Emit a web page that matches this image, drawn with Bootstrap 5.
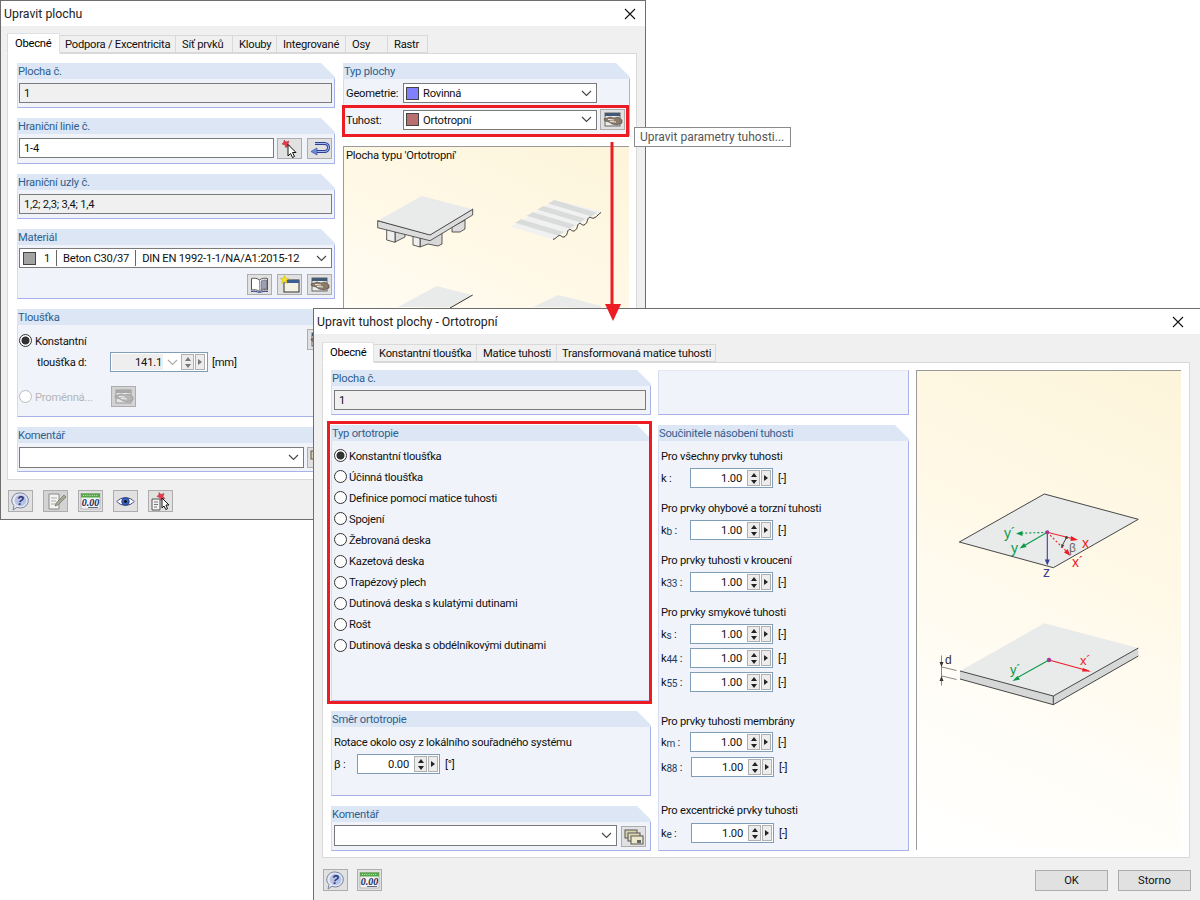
<!DOCTYPE html>
<html lang="cs">
<head>
<meta charset="utf-8">
<title>Upravit plochu</title>
<link href="https://cdn.jsdelivr.net/npm/bootstrap@5.3.0/dist/css/bootstrap.min.css" rel="stylesheet">
<style>
html,body{margin:0;background:#fff}
body{position:relative;width:1200px;height:900px;overflow:hidden;font-family:Roboto,"Liberation Sans",sans-serif;font-size:11.2px;line-height:16px;letter-spacing:-.23px;color:#111;--bs-body-font-size:11.2px}
.win{position:absolute;background:#f0f0f0;border:1px solid #6e6e6e;display:flex;flex-direction:column}
.w1{left:0;top:0;width:646px;height:520px;padding-bottom:6px}
.w2{left:313px;top:308px;width:890px;height:595px}
.wt{background:#fff;height:25px;flex:none;display:flex;align-items:center;justify-content:space-between;padding:0 9px 0 3px;font-size:12.300px;letter-spacing:0;color:#222}
.w2 .wt{padding-right:18px}
.wb{padding:7px 6px 0;flex:1;min-height:0;display:flex;flex-direction:column}
.w2 .wb{padding:8px 8px 0}
.tabsx{border:0;flex-wrap:nowrap;margin:0;height:20px;position:relative;z-index:2}
.tabsx .nav-link{height:18px;margin:2px 0 0;padding:1px 0 0 6px;border:1px solid #d9d9d9;border-left:0;border-radius:0;background:#f0f0f0;color:#111;line-height:16px;font-size:11.2px;white-space:nowrap;overflow:hidden;display:block;width:100%}
.tabsx .nav-link.active{height:21px;margin:0;background:#fff;border-left:1px solid #d9d9d9;border-bottom-color:#fff;padding:2px 0 0 7px}
.t1 .nav-item:nth-child(1){width:53px}.t1 .nav-item:nth-child(2){width:116px}.t1 .nav-item:nth-child(3){width:57px}.t1 .nav-item:nth-child(4){width:44px}.t1 .nav-item:nth-child(5){width:69px}.t1 .nav-item:nth-child(6){width:42px}.t1 .nav-item:nth-child(7){width:40px}
.t2 .nav-item:nth-child(1){width:52px}.t2 .nav-item:nth-child(2){width:103px}.t2 .nav-item:nth-child(3){width:80px}.t2 .nav-item:nth-child(4){width:159px}
.t1 .nav-item:nth-child(2) .nav-link,.t2 .nav-item:nth-child(2) .nav-link,.t2 .nav-item:nth-child(4) .nav-link{padding-left:5px}
.pan{background:#fff;border:1px solid #d9d9d9;display:flex}
.w1 .pan{width:630px;height:427px;padding:9px 0 0 9px;gap:8px;overflow:hidden}
.w2 .pan{width:868px;height:496px;padding:7px 0 0 8px;gap:7px;overflow:hidden}
.colv{display:flex;flex-direction:column;gap:10px;flex:none}
.cl1{width:318px}.cr1{width:287px}.cl2{width:320px}.cm2{width:251px}
.gb{display:flex;flex-direction:column;flex:none;position:relative}
.gbh{height:16px;flex:none;background:#dce6f4;color:#2f5f8f;padding-left:1px;line-height:17px;font-size:11.2px;clip-path:polygon(0 0,calc(100% - 14px) 0,100% 14px,100% 100%,0 100%)}
.gbb{flex:1;background:#f0f4fa;border-right:1px solid #a9b2e8;border-bottom:1px solid #a9b2e8;border-left:1px solid #d5dbf3;padding:4px 2px 0 1px;min-height:0}
.w2 .gbb{padding:4px 4px 0 2px}
.h45{height:45px}.h46{height:46px}.h70{height:70px}.h108{height:108px}.h73{height:73px}.h276{height:276px}.h85{height:85px}.h426{height:426px}
.emptyb{border-top:1px solid #e4e8f4}
.fx{height:20px;border:1px solid #7a7a7a;background:#fff;border-radius:0;padding:2px 4px 0;font-size:11.2px;line-height:16px;color:#111;min-height:0;display:flex;align-items:center}
.fx.ro{background:#f0f0f0;opacity:1}
.lr{display:flex;gap:3px;align-items:flex-start}
.bt{width:25px;height:21px;background:#e1e1e1;border:1px solid #adadad;border-radius:0;padding:0;display:flex;align-items:center;justify-content:center;flex:none;--bs-btn-padding-x:0}
.bt svg{width:23px;height:19px;display:block}
.bt.dis{background:#d3d3d3}
.bsp{margin-left:2px}
.bms{margin-left:3px}
.bend{display:flex;justify-content:flex-end;gap:5px;margin-top:6px}
.cmb{display:flex;align-items:center;height:20px;border:1px solid #7a7a7a;background:#fff;padding:0 4px 0 2px;position:relative;flex:none}
.cmb>span:not(.sw):not(.sepv){padding-top:2px}
.cmbw{width:194px}
.cmbm{margin-top:-1px;padding-left:3px}
.cm21{height:21px}
.cmup{margin-top:-1px}
.chev{margin-left:auto;width:11px;height:7px;flex:none}
.sw{width:13px;height:13px;border:1px solid #444;flex:none;margin-right:4px}
.swg{background:#a3a3a3}.swb{background:#8080ff}.swr{background:#b96f6f}
.sepv{width:1px;height:16px;background:#666;margin:0 6px;flex:none}
.rowlbl{width:58px;flex:none;padding:2px 0 0 1px}
.mt6x{margin-top:6px}
.redr{position:relative}
.redr::after{content:"";position:absolute;border:3px solid #ed1c24;pointer-events:none;z-index:5}
.rr1::after{left:-3px;top:-4px;right:-2px;bottom:-7px}
.rr2::after{left:-4px;top:-4px;right:-1px;bottom:-3px}
.rb.form-check-input{width:13px;height:13px;margin:0;flex:none;border:1px solid #333;background-color:#fff;background-image:none;box-shadow:none;float:none}
.rb.form-check-input:checked[type=radio]{background-color:#fff;border-color:#333;background-image:radial-gradient(circle at center,#333 0 3.600px,#fff 4.400px)}
.rb.form-check-input:disabled{opacity:1;border-color:#bbb;background:#fff}
.radl{display:flex;flex-direction:column}
.radl .form-check{height:21.100px;min-height:0;padding:0;margin:0;display:flex;align-items:center;gap:2px}
.form-check-label{font-size:11.2px;opacity:1;padding-top:2px}
.gry{color:#777}
.th1{height:23px;display:flex;align-items:center;gap:3px}
.th1 .bt{margin-left:auto;align-self:flex-start}
.th2{display:flex;align-items:center;height:20px;padding-left:18px}
.th2 .ll{width:73px;padding-top:2px}
.th3{display:flex;align-items:center;gap:3px;height:21px;margin-top:14px}
.th3 .ll{width:73px}
.sp{display:flex;align-items:stretch;height:20px;border:1px solid #7f9db9;background:#fff;width:83px;flex:none;padding:1px}
.sp .v{flex:1;text-align:right;padding:1px 5px 0 0;line-height:16px}
.sp .ud{width:13px;background:#ececec;border:1px solid #b0b0b0;display:flex;flex-direction:column;align-items:center;justify-content:space-around;flex:none}
.sp .ud i{display:block;width:0;height:0;border-left:3px solid transparent;border-right:3px solid transparent}
.sp .ud i:first-child{border-bottom:4px solid #222}
.sp .ud i:last-child{border-top:4px solid #222}
.sp .ar{width:10px;background:#ececec;border:1px solid #b0b0b0;margin-left:1px;display:flex;align-items:center;justify-content:center;flex:none}
.sp .ar i{display:block;width:0;height:0;border-top:3px solid transparent;border-bottom:3px solid transparent;border-left:4px solid #222}
.spth{width:98px}
.spth .v{background:#eee;flex:none;width:51px;padding-right:1px}
.spth .gch{width:18px;display:flex;align-items:center;justify-content:center;flex:none}
.spth .gch svg{width:11px;height:7px}
.spth .ud i:first-child{border-bottom-color:#777}.spth .ud i:last-child{border-top-color:#777}.spth .ar i{border-left-color:#777}
.unit{margin-left:4px;padding-top:2px}
.srow{display:flex;align-items:center;height:20px}
.srow .k{width:29px;flex:none;padding-top:2px}
.srow .k.kb{width:23px}
.srow .unit{margin-left:5px}
.ks1 .k{width:30px}
.sline{height:16px;line-height:16px}
.mt3x{margin-top:3px}.mt2x{margin-top:2px}.mt5x{margin-top:5px}.mt13{margin-top:13px}.mt22{margin-top:22px}.mt26{margin-top:26px}
.w2 .gbb.mid8{padding-top:8px}
.kk sub{font-size:10px;bottom:-.1em;color:#1c3d66}
.cmrow{display:flex;gap:4px;align-items:flex-start}
.prev{background:linear-gradient(205deg,#fdf5da 0%,#fff8e6 35%,#fffdf6 70%,#fff 100%);border-left:1px solid #9a9a9a;border-top:1px solid #9a9a9a;position:relative;flex:none}
.pv1{width:286px;height:324px}
.pv2{width:265px;height:480px}
.pv1 .pt{padding:1px 0 0 2px;height:20px}
.prev svg{display:block}
.foot{display:flex;align-items:flex-start;gap:10px;padding:10px 0 0 1px}
.foot .bt{height:22px}
.w2 .foot{padding:11px 0 0 1px;gap:9px;width:869px}
.foot .bw{margin-left:auto;display:flex;gap:10px;margin-top:1px}
.bw .btn{width:73px;height:21px;border-radius:0;background:#e1e1e1;border:1px solid #adadad;font-size:11.2px;line-height:18px;padding:0;color:#111;letter-spacing:0}
.tipx{position:absolute;left:634px;top:127px;width:157px;height:20px;background:#fff;border:1px solid #8a8a8a;color:#555;font-size:12px;letter-spacing:0;line-height:18px;padding-left:5px;z-index:20;white-space:nowrap}
.ovl{position:absolute;left:0;top:0;z-index:30;pointer-events:none}
</style>
</head>
<body>
<svg width="0" height="0" class="d-block" aria-hidden="true">
<defs>
<symbol id="chev" viewBox="0 0 11 7"><path d="M1 1l4.500 4.500L10 1" fill="none" stroke="#444" stroke-width="1.100"/></symbol>
<symbol id="chevg" viewBox="0 0 11 7"><path d="M1 1l4.500 4.500L10 1" fill="none" stroke="#aaa" stroke-width="1.100"/></symbol>
<symbol id="x" viewBox="0 0 12 12"><path d="M1 1l10 10M11 1L1 11" stroke="#111" stroke-width="1.100"/></symbol>
<symbol id="hand" viewBox="0 0 23 19"><rect x="4" y="3" width="15" height="13" fill="#ececec" stroke="#666"/><rect x="4" y="3" width="15" height="3" fill="#3f5a78"/><path d="M3 9l6-2 4 1 4-1 4 3v3l-5 2-5-1-3-2-4-1z" fill="#8b7a68" stroke="#3b3029" stroke-width=".5"/><path d="M7 9.500l6 .5M9 11.500l6 .5" stroke="#f3ede4" stroke-width="1.200"/></symbol>
<symbol id="handg" viewBox="0 0 23 19"><rect x="4" y="3" width="15" height="13" fill="#e4e4e4" stroke="#999"/><rect x="4" y="3" width="15" height="3" fill="#a8a8a8"/><path d="M3 9l6-2 4 1 4-1 4 3v3l-5 2-5-1-3-2-4-1z" fill="#b5b5b5" stroke="#8f8f8f" stroke-width=".6"/><path d="M7 9.500l6 .5M9 11.500l6 .5" stroke="#f2f2f2" stroke-width="1.100"/></symbol>
<symbol id="pick" viewBox="0 0 23 19"><path d="M6 1l2 2 3-1-1 3 2 2-3 0-1 2-1-3-3-1 2-2z" fill="#e8384a" stroke="#a12b38" stroke-width=".5"/><path d="M10 5.500v11.500l2.500-2.500 2 4 2-1-2-4h3.500z" fill="#fff" stroke="#111" stroke-width="1"/></symbol>
<symbol id="undo" viewBox="0 0 23 19"><path d="M7 4.500h9.500a4 4 0 0 1 0 8H8" fill="none" stroke="#2c3f93" stroke-width="3"/><path d="M7 4.500h9.500a4 4 0 0 1 0 8H8" fill="none" stroke="#a6bbf0" stroke-width="1.100"/><path d="M9 9L3 12.500 9 16z" fill="#6f8cdc" stroke="#2c3f93" stroke-width=".6"/></symbol>
<symbol id="book" viewBox="0 0 23 19"><path d="M11.500 5C9 3 6 3 3.500 3.500V15c3-.5 5.500-.5 8 1.500 2.500-2 5-2 8-1.500V3.500C17 3 14 3 11.500 5z" fill="#fff" stroke="#555"/><path d="M11.500 5v11.500M13 6c2-1 4-1.200 5.500-1v9c-2-.2-3.800 0-5.500 1z" fill="#9a9fb5" stroke="#555" stroke-width=".6"/><path d="M3 16.500c3-.5 5.500 0 8.500 1 3-1 5.500-1.500 8.500-1" fill="none" stroke="#2c3f93"/></symbol>
<symbol id="newwin" viewBox="0 0 23 19"><rect x="6" y="5" width="15" height="12" fill="#f4f2e4" stroke="#333"/><rect x="6" y="5" width="15" height="3" fill="#3b5d8f"/><path d="M6.500.5l1.300 2.700 3 .3-2.200 2 .6 3-2.700-1.500L3.800 8.500l.6-3-2.200-2 3-.3z" fill="#f5e12c" stroke="#b9a514" stroke-width=".4"/></symbol>
<symbol id="help" viewBox="0 0 23 19"><path d="M11.500 1a8 7.500 0 1 1-3.500 14.300L4 18l1-4.400A8 7.500 0 0 1 11.500 1z" fill="#e4e8f2" stroke="#7a83a2"/><circle cx="11.500" cy="8.500" r="5.800" fill="#b7c3e6"/><text x="11.500" y="12.700" text-anchor="middle" font-family="Liberation Sans,sans-serif" font-size="12" font-weight="bold" font-style="italic" fill="#27357a">?</text></symbol>
<symbol id="calc" viewBox="0 0 23 19"><rect x="2" y="1.500" width="19" height="15.500" fill="#f3f3f3" stroke="#999" stroke-width=".6"/><rect x="2" y="1.500" width="19" height="4" fill="#55a646"/><path d="M4 3.500h15" stroke="#c8e6c0" stroke-dasharray="1 1.200" stroke-width="1.200"/><text x="11.500" y="14" text-anchor="middle" font-family="Liberation Serif,serif" font-size="10" font-weight="bold" font-style="italic" fill="#1c2a5a">0.00</text><path d="M9 15.500h10" stroke="#1c2a5a" stroke-width=".7"/></symbol>
<symbol id="note" viewBox="0 0 23 19"><path d="M5 2h10v15H5z" fill="#f4f4f0" stroke="#888"/><path d="M7 6h6M7 9h5M7 12h4" stroke="#aaa"/><path d="M20 3l2 2-8 8-3 1 1-3z" fill="#a8a890" stroke="#666" stroke-width=".6"/></symbol>
<symbol id="eye" viewBox="0 0 23 19"><path d="M3 9.500c3.500-5 13.500-5 17 0-3.500 5-13.500 5-17 0z" fill="#fff" stroke="#3a3f7a"/><circle cx="11.500" cy="9.500" r="3.800" fill="#3462c8" stroke="#1d2a66" stroke-width=".7"/><circle cx="11.500" cy="9.500" r="1.500" fill="#111"/></symbol>
<symbol id="selpin" viewBox="0 0 23 19"><path d="M3 7h8v11H3z" fill="#f2f2f2" stroke="#555"/><path d="M5 10h4M5 12.500h4M5 15h3" stroke="#777"/><path d="M10 .5l2 2 3-1-1 3 2 2-3 0-1 2-1-3-3-1 2-2z" fill="#e8384a" stroke="#a12b38" stroke-width=".5"/><path d="M13 6v10l2-2 1.800 3.500 1.700-.8L17 13h3z" fill="#fff" stroke="#111"/></symbol>
<symbol id="copies" viewBox="0 0 23 19"><rect x="3" y="3" width="12" height="8" fill="#d8d2a8" stroke="#555"/><rect x="6" y="6" width="12" height="8" fill="#dfd9b2" stroke="#555"/><rect x="9" y="9" width="12" height="8" fill="#ece8cc" stroke="#555"/><rect x="15" y="13" width="4" height="3" fill="#666"/></symbol>
</defs>
</svg>

<section class="win w1">
  <div class="wt"><span>Upravit plochu</span><svg width="12" height="12"><use href="#x"/></svg></div>
  <div class="wb">
    <ul class="nav nav-tabs tabsx t1">
      <li class="nav-item"><a class="nav-link active" href="#">Obecné</a></li>
      <li class="nav-item"><a class="nav-link" href="#">Podpora / Excentricita</a></li>
      <li class="nav-item"><a class="nav-link" href="#">Síť prvků</a></li>
      <li class="nav-item"><a class="nav-link" href="#">Klouby</a></li>
      <li class="nav-item"><a class="nav-link" href="#">Integrované</a></li>
      <li class="nav-item"><a class="nav-link" href="#">Osy</a></li>
      <li class="nav-item"><a class="nav-link" href="#">Rastr</a></li>
    </ul>
    <div class="pan">
      <div class="colv cl1">
        <div class="gb h45"><div class="gbh">Plocha č.</div><div class="gbb"><div class="fx ro">1</div></div></div>
        <div class="gb h46"><div class="gbh">Hraniční linie č.</div><div class="gbb">
          <div class="lr"><div class="fx w-100">1-4</div><button class="btn bt" type="button"><svg><use href="#pick"/></svg></button><button class="btn bt bsp" type="button"><svg><use href="#undo"/></svg></button></div></div></div>
        <div class="gb h45"><div class="gbh">Hraniční uzly č.</div><div class="gbb"><div class="fx ro">1,2; 2,3; 3,4; 1,4</div></div></div>
        <div class="gb h70"><div class="gbh">Materiál</div><div class="gbb">
          <div class="cmb cmbm"><span class="sw swg"></span><span class="ms-1">1</span><span class="sepv"></span><span>Beton C30/37</span><span class="sepv"></span><span>DIN EN 1992-1-1/NA/A1:2015-12</span><svg class="chev"><use href="#chev"/></svg></div>
          <div class="bend"><button class="btn bt" type="button"><svg><use href="#book"/></svg></button><button class="btn bt" type="button"><svg><use href="#newwin"/></svg></button><button class="btn bt" type="button"><svg><use href="#hand"/></svg></button></div>
        </div></div>
        <div class="gb h108"><div class="gbh">Tloušťka</div><div class="gbb">
          <div class="th1"><input class="form-check-input rb" type="radio" name="a" checked><label class="form-check-label">Konstantní</label><button class="btn bt" type="button"><svg><use href="#hand"/></svg></button></div>
          <div class="th2"><span class="ll">tloušťka d:</span><div class="sp spth"><span class="v">141.1</span><span class="gch"><svg><use href="#chevg"/></svg></span><span class="ud"><i></i><i></i></span><span class="ar"><i></i></span></div><span class="unit">[mm]</span></div>
          <div class="th3"><input class="form-check-input rb" type="radio" name="a" disabled><label class="form-check-label gry ll">Proměnná...</label><button class="btn bt dis" type="button"><svg><use href="#handg"/></svg></button></div>
        </div></div>
        <div class="gb h45"><div class="gbh">Komentář</div><div class="gbb">
          <div class="lr"><div class="cmb cm21 flex-grow-1"><svg class="chev"><use href="#chev"/></svg></div><button class="btn bt" type="button"><svg><use href="#copies"/></svg></button></div></div></div>
      </div>
      <div class="colv cr1">
        <div class="gb h73"><div class="gbh">Typ plochy</div><div class="gbb">
          <div class="d-flex align-items-center"><span class="rowlbl">Geometrie:</span><div class="cmb cmbw"><span class="sw swb"></span><span>Rovinná</span><svg class="chev"><use href="#chev"/></svg></div></div>
          <div class="d-flex align-items-center redr rr1 mt6x"><span class="rowlbl">Tuhost:</span><div class="cmb cmbw"><span class="sw swr"></span><span>Ortotropní</span><svg class="chev"><use href="#chev"/></svg></div><button class="btn bt bms" type="button"><svg><use href="#hand"/></svg></button></div>
        </div></div>
        <div class="prev pv1">
          <div class="pt">Plocha typu 'Ortotropní'</div>
          <svg width="285" height="300" viewBox="344 167 285 300">
            <g stroke="#333" stroke-width=".8" stroke-linejoin="round">
              <path d="M395 242l10-5v-8l-10 2z" fill="#dadada"/>
              <path d="M386.700 226v14l8.300 2.300v-14z" fill="#efefef"/>
              <path d="M420 235v12l8-3 10 2 4-2v-12l-12 8z" fill="#d8d8d8"/>
              <path d="M413 232v13l7 2v-13z" fill="#efefef"/>
              <path d="M452 226v6l8 0 5-3v-9l-13 7z" fill="#dcdcdc"/>
              <path d="M377.700 220.700v7l52.300 13 42.700-25.700v-6l-42.700 25.700z" fill="#dcdcdc"/>
            </g>
            <path d="M377.700 220.700l44-24.700 51 13.300-42.700 25.700z" fill="#e9eaea"/>
            <path d="M377.700 220.700L430 235l42.700-25.700" fill="none" stroke="#333" stroke-width=".8"/>
            <path d="M511 226.700l44-26.700 46.700 11.700-48.400 27.600z" fill="#f1f1f1"/>
            <path d="M521 219.300l42.700 12.700-6 3.500-42.700-12.700zM532.700 212.300l42.600 12.700-6 3.500-42.600-12.700zM543.300 206L586 218.700l-6 3.500-42.700-12.700zM554.300 200l42.700 12.700-6 3.500-42.700-12.700z" fill="#dadbdb"/>
            <path d="M553 239.500c3-1 4-3 6-4s3 3 6 1 2-6 4-7 3 3 6 1 2-6 4-7 3 3 6 1 2-6 4-7 3 2 6 0 3-3 6-5" fill="none" stroke="#222" stroke-width=".9"/>
            <path d="M398 307l38.700-21 36 9.300-23 12z" fill="#e9eaea"/>
            <path d="M450 308l22.700-13" stroke="#333" fill="none"/>
            <path d="M533 307l25.300-12 43.400 11-2 2z" fill="#e9eaea"/>
          </svg>
        </div>
      </div>
    </div>
    <div class="foot">
      <button class="btn bt" type="button"><svg><use href="#help"/></svg></button>
      <button class="btn bt dis" type="button"><svg><use href="#note"/></svg></button>
      <button class="btn bt" type="button"><svg><use href="#calc"/></svg></button>
      <button class="btn bt" type="button"><svg><use href="#eye"/></svg></button>
      <button class="btn bt" type="button"><svg><use href="#selpin"/></svg></button>
    </div>
  </div>
</section>

<div class="tipx">Upravit parametry tuhosti...</div>

<section class="win w2">
  <div class="wt"><span>Upravit tuhost plochy - Ortotropní</span><svg width="12" height="12"><use href="#x"/></svg></div>
  <div class="wb">
    <ul class="nav nav-tabs tabsx t2">
      <li class="nav-item"><a class="nav-link active" href="#">Obecné</a></li>
      <li class="nav-item"><a class="nav-link" href="#">Konstantní tloušťka</a></li>
      <li class="nav-item"><a class="nav-link" href="#">Matice tuhosti</a></li>
      <li class="nav-item"><a class="nav-link" href="#">Transformovaná matice tuhosti</a></li>
    </ul>
    <div class="pan">
      <div class="colv cl2">
        <div class="gb h45"><div class="gbh">Plocha č.</div><div class="gbb"><div class="fx ro">1</div></div></div>
        <div class="gb h276 redr rr2"><div class="gbh">Typ ortotropie</div><div class="gbb">
          <div class="radl">
            <div class="form-check"><input class="form-check-input rb" type="radio" name="b" checked><label class="form-check-label">Konstantní tloušťka</label></div>
            <div class="form-check"><input class="form-check-input rb" type="radio" name="b"><label class="form-check-label">Účinná tloušťka</label></div>
            <div class="form-check"><input class="form-check-input rb" type="radio" name="b"><label class="form-check-label">Definice pomocí matice tuhosti</label></div>
            <div class="form-check"><input class="form-check-input rb" type="radio" name="b"><label class="form-check-label">Spojení</label></div>
            <div class="form-check"><input class="form-check-input rb" type="radio" name="b"><label class="form-check-label">Žebrovaná deska</label></div>
            <div class="form-check"><input class="form-check-input rb" type="radio" name="b"><label class="form-check-label">Kazetová deska</label></div>
            <div class="form-check"><input class="form-check-input rb" type="radio" name="b"><label class="form-check-label">Trapézový plech</label></div>
            <div class="form-check"><input class="form-check-input rb" type="radio" name="b"><label class="form-check-label">Dutinová deska s kulatými dutinami</label></div>
            <div class="form-check"><input class="form-check-input rb" type="radio" name="b"><label class="form-check-label">Rošt</label></div>
            <div class="form-check"><input class="form-check-input rb" type="radio" name="b"><label class="form-check-label">Dutinová deska s obdélníkovými dutinami</label></div>
          </div>
        </div></div>
        <div class="gb h85"><div class="gbh">Směr ortotropie</div><div class="gbb mid8">
          <div class="sline">Rotace okolo osy z lokálního souřadného systému</div>
          <div class="srow mt3x"><span class="k kb">β :</span><div class="sp"><span class="v">0.00</span><span class="ud"><i></i><i></i></span><span class="ar"><i></i></span></div><span class="unit">[°]</span></div>
        </div></div>
        <div class="gb h45"><div class="gbh">Komentář</div><div class="gbb">
          <div class="cmrow"><div class="cmb cm21 cmup flex-grow-1"><svg class="chev"><use href="#chev"/></svg></div><button class="btn bt" type="button"><svg><use href="#copies"/></svg></button></div></div></div>
      </div>
      <div class="colv cm2">
        <div class="gb h45"><div class="gbb emptyb"></div></div>
        <div class="gb h426"><div class="gbh">Součinitele násobení tuhosti</div><div class="gbb mid8">
          <div class="sline">Pro všechny prvky tuhosti</div>
          <div class="srow mt3x"><span class="k kk">k :</span><div class="sp"><span class="v">1.00</span><span class="ud"><i></i><i></i></span><span class="ar"><i></i></span></div><span class="unit">[-]</span></div>
          <div class="sline mt13">Pro prvky ohybové a torzní tuhosti</div>
          <div class="srow mt3x"><span class="k kk">k<sub>b</sub> :</span><div class="sp"><span class="v">1.00</span><span class="ud"><i></i><i></i></span><span class="ar"><i></i></span></div><span class="unit">[-]</span></div>
          <div class="sline mt13">Pro prvky tuhosti v kroucení</div>
          <div class="srow mt3x"><span class="k kk">k<sub>33</sub> :</span><div class="sp"><span class="v">1.00</span><span class="ud"><i></i><i></i></span><span class="ar"><i></i></span></div><span class="unit">[-]</span></div>
          <div class="sline mt13">Pro prvky smykové tuhosti</div>
          <div class="srow mt3x"><span class="k kk">k<sub>s</sub> :</span><div class="sp"><span class="v">1.00</span><span class="ud"><i></i><i></i></span><span class="ar"><i></i></span></div><span class="unit">[-]</span></div>
          <div class="srow mt-1"><span class="k kk">k<sub>44</sub> :</span><div class="sp"><span class="v">1.00</span><span class="ud"><i></i><i></i></span><span class="ar"><i></i></span></div><span class="unit">[-]</span></div>
          <div class="srow mt-1"><span class="k kk">k<sub>55</sub> :</span><div class="sp"><span class="v">1.00</span><span class="ud"><i></i><i></i></span><span class="ar"><i></i></span></div><span class="unit">[-]</span></div>
          <div class="sline mt22">Pro prvky tuhosti membrány</div>
          <div class="srow mt2x"><span class="k kk">k<sub>m</sub> :</span><div class="sp"><span class="v">1.00</span><span class="ud"><i></i><i></i></span><span class="ar"><i></i></span></div><span class="unit">[-]</span></div>
          <div class="srow mt5x ks1"><span class="k kk">k<sub>88</sub> :</span><div class="sp"><span class="v">1.00</span><span class="ud"><i></i><i></i></span><span class="ar"><i></i></span></div><span class="unit">[-]</span></div>
          <div class="sline mt26">Pro excentrické prvky tuhosti</div>
          <div class="srow mt-1 ks1"><span class="k kk">k<sub>e</sub> :</span><div class="sp"><span class="v">1.00</span><span class="ud"><i></i><i></i></span><span class="ar"><i></i></span></div><span class="unit">[-]</span></div>
        </div></div>
      </div>
      <div class="prev pv2">
        <svg width="265" height="480" viewBox="917 371 265 480" font-family="Liberation Sans,sans-serif">
          <path d="M1044.300 494l94 25.300-85 48.400-94-25.700z" fill="#e9eaea" stroke="#333" stroke-width=".9"/>
          <path d="M1047.300 532.300L1076 539.500" stroke="#ed1c24" stroke-width="1"/><path d="M1078 540l-7-4-.5 5z" fill="#ed1c24"/>
          <path d="M1047.300 532.300L1069 554" stroke="#ed1c24" stroke-width="1.100" stroke-dasharray="2 2"/><path d="M1070.500 556l-3-7-3.500 3.500z" fill="#ed1c24"/>
          <path d="M1047.300 532.300L1019 533.300" stroke="#0a9a4a" stroke-width="1.100" stroke-dasharray="2 2"/><path d="M1016 533.500l6.500 2.500v-5z" fill="#0a9a4a"/>
          <path d="M1047.300 532.300L1022 547" stroke="#0a9a4a" stroke-width="1.100"/><path d="M1019.500 548.500l7-1.500-2.500-4z" fill="#0a9a4a"/>
          <path d="M1047.300 532.300V562" stroke="#3b3b9a" stroke-width="1.100"/><path d="M1047.300 565.500l2.500-6h-5z" fill="#3b3b9a"/>
          <path d="M1066.500 537.500L1062 546" stroke="#444" stroke-width="1"/><circle cx="1066.500" cy="537.500" r="1.500" fill="#444"/><path d="M1061 548l3.500-2.500-3-1.500z" fill="#444"/>
          <circle cx="1047.300" cy="532.300" r="2" fill="#a23c8f"/>
          <text x="1082" y="548" font-size="14" fill="#ed1c24">x</text>
          <text x="1072" y="567" font-size="14" fill="#ed1c24">x´</text>
          <text x="1004" y="538" font-size="14" fill="#0a9a4a">y´</text>
          <text x="1011" y="553" font-size="14" fill="#0a9a4a">y</text>
          <text x="1043" y="577" font-size="14" fill="#3b3b9a">z</text>
          <text x="1069" y="552" font-size="12" fill="#666">β</text>
          <path d="M960 671l93.300 25 85-48v8l-85 48.700L960 679z" fill="#d6d7d7"/>
          <path d="M1044.300 623.300l94 24.700-85 48-93.300-25z" fill="#e9eaea"/>
          <path d="M960 671l93.300 25 85-48M960 679l93.300 25.700 85-48.700M1053.300 696v8.700" fill="none" stroke="#333" stroke-width=".9"/>
          <path d="M1049 660l40 11" stroke="#ed1c24" stroke-width="1.100"/><path d="M1091 671.500l-8-3.500-1 3.500z" fill="#ed1c24"/>
          <path d="M1049 660l-34 19" stroke="#0a9a4a" stroke-width="1.100"/><path d="M1012.500 681l7.500-1.500-2.500-3.500z" fill="#0a9a4a"/>
          <circle cx="1049" cy="660" r="2.200" fill="#a23c8f"/>
          <text x="1080" y="665" font-size="13" fill="#ed1c24">x´</text>
          <text x="1010" y="674" font-size="13" fill="#0a9a4a">y´</text>
          <text x="945" y="664" font-size="12" fill="#333">d</text>
          <path d="M941.500 655.500v30M942 667l14.500 3.500M942 676l14.500 3.500" stroke="#555" stroke-width=".7" fill="none"/>
          <path d="M941.500 667l-2-5h4zM941.500 676l-2 5h4z" fill="#333"/>
        </svg>
      </div>
    </div>
    <div class="foot">
      <button class="btn bt" type="button"><svg><use href="#help"/></svg></button>
      <button class="btn bt" type="button"><svg><use href="#calc"/></svg></button>
      <div class="bw"><button class="btn" type="button">OK</button><button class="btn" type="button">Storno</button></div>
    </div>
  </div>
</section>

<svg class="ovl" width="1200" height="900" aria-hidden="true">
  <path d="M612 142V306" stroke="#ed1c24" stroke-width="3"/>
  <path d="M605 304h16l-8 17z" fill="#ed1c24"/>
</svg>
<script src="https://cdn.jsdelivr.net/npm/bootstrap@5.3.0/dist/js/bootstrap.bundle.min.js"></script>
</body>
</html>
